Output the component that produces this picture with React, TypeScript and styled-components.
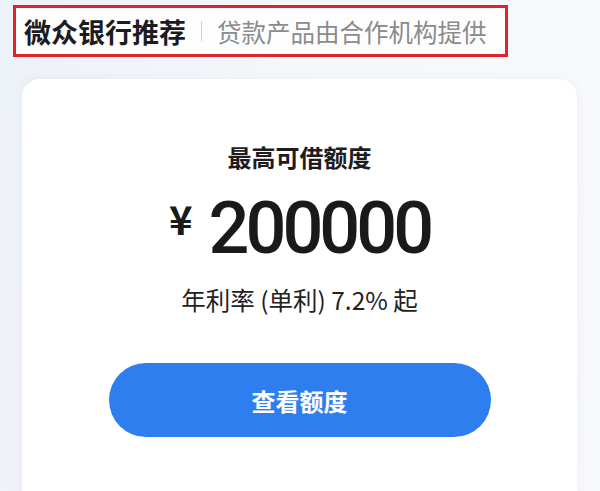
import React from 'react';
import styled, { createGlobalStyle } from 'styled-components';

const GlobalStyle = createGlobalStyle`
  html, body {
    margin: 0;
    padding: 0;
  }
  body {
    font-family: 'Noto Sans CJK SC', 'Noto Sans', sans-serif;
    background: #f4f6fa;
  }
`;

const Page = styled.div`
  width: 600px;
  height: 491px;
  overflow: hidden;
  box-sizing: border-box;
  padding-top: 5px;
  background: linear-gradient(100deg, #edf1f8 0%, #f5f7fa 45%, #f8f9fb 100%);
`;

// 상단 제목 영역 (빨간 테두리)
const Header = styled.div`
  box-sizing: border-box;
  width: 495px;
  height: 52px;
  margin-left: 13px;
  border: 3px solid #e1222b;
  background: #fdfdfe;
  display: flex;
  align-items: center;
  padding-left: 8px;
`;

const Brand = styled.span`
  font-size: 27px;
  font-weight: 700;
  color: #1c1c1e;
`;

const Divider = styled.span`
  width: 1px;
  height: 20px;
  background: #cfd2d6;
  margin: 0 15px;
`;

const Sub = styled.span`
  font-size: 24.5px;
  font-weight: 400;
  color: #8a8b8d;
`;

const Card = styled.div`
  margin: 22px 0 0 22px;
  width: 555px;
  height: 460px;
  box-sizing: border-box;
  background: #ffffff;
  border-radius: 18px;
  box-shadow: 0 0 10px rgba(40, 60, 100, 0.05);
  display: flex;
  flex-direction: column;
  align-items: center;
  padding-top: 62px;
`;

const Label = styled.div`
  font-size: 24px;
  font-weight: 700;
  color: #1d1d1f;
  line-height: 32px;
`;

// 금액: ¥ 기호는 숫자 윗부분에 맞춤
const Amount = styled.div`
  display: flex;
  align-items: flex-start;
  margin-top: 21px;
  height: 70px;
  color: #1a1a1a;
`;

const Currency = styled.span`
  font-family: 'Noto Sans CJK SC', sans-serif;
  font-size: 40px;
  font-weight: 700;
  line-height: 40px;
  margin: 4px 16px 0 0;
`;

const Digits = styled.span`
  font-family: Roboto, 'Noto Sans', sans-serif;
  font-size: 72px;
  font-weight: 500;
  letter-spacing: -4px;
  line-height: 70px;
`;

const Rate = styled.div`
  margin-top: 20px;
  font-size: 24.5px;
  color: #222;
  line-height: 32px;
`;

const Button = styled.button`
  margin-top: 47px;
  width: 382px;
  height: 74px;
  border: none;
  border-radius: 37px;
  background: #2e7ef0;
  color: #fff;
  font-family: 'Noto Sans CJK SC', sans-serif;
  font-size: 24px;
  font-weight: 700;
  cursor: pointer;
`;

const App: React.FC = () => {
  return (
    <>
      <GlobalStyle />
      <Page>
        <Header>
          <Brand>微众银行推荐</Brand>
          <Divider />
          <Sub>贷款产品由合作机构提供</Sub>
        </Header>
        <Card>
          <Label>最高可借额度</Label>
          <Amount>
            <Currency>¥</Currency>
            <Digits>200000</Digits>
          </Amount>
          <Rate>年利率 (单利) 7.2% 起</Rate>
          <Button>查看额度</Button>
        </Card>
      </Page>
    </>
  );
};

export default App;
